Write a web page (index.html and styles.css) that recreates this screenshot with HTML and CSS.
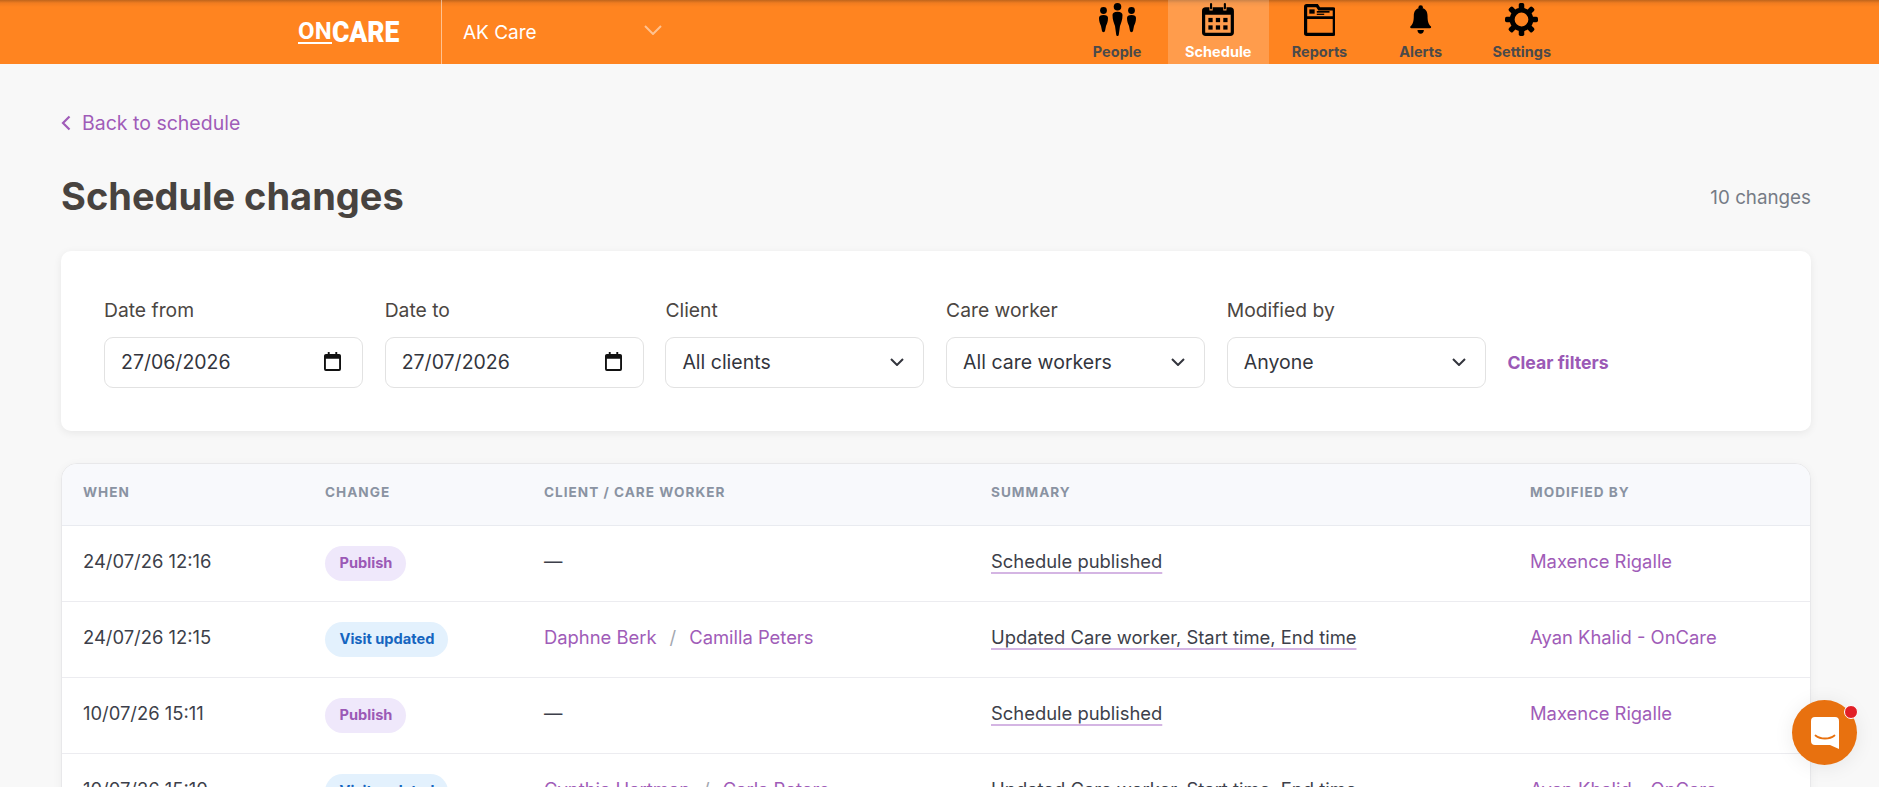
FILE: index.html
```html
<!DOCTYPE html>
<html lang="en">
<head>
<meta charset="utf-8">
<title>Schedule changes</title>
<link rel="stylesheet" href="styles.css">
</head>
<body>
<header class="topbar">
  <a class="logo"><span class="logo-on">ON</span><span class="logo-care">CARE</span></a>
  <div class="org">
    <span class="org-name">AK Care</span>
    <svg class="org-chevron" viewBox="0 0 18 10"><path d="M1 1l8 8 8-8" fill="none" stroke="currentColor" stroke-width="2"/></svg>
  </div>
  <nav class="nav">
    <a class="nav-item">
      <svg class="nav-icon" viewBox="0 0 37 33"><circle cx="18.500" cy="3.800" r="3.800"/><path d="M13.500 12c0-2 1.500-3.300 5-3.300s5 1.300 5 3.300c0 5-1.500 8-2.500 11l-1.200 8.500c-.3 2-2.300 2-2.600 0L16 23c-1-3-2.500-6-2.500-11z"/><circle cx="4.500" cy="7.500" r="3.400"/><path d="M0 15c0-2 1.500-3 4.500-3s4.500 1 4.500 3c0 3.500-1 5.500-2 8l-1 5c-.3 1.500-2.700 1.500-3 0L2 23C1 20.500 0 18.500 0 15z"/><circle cx="32.500" cy="7.500" r="3.400"/><path d="M0 15c0-2 1.500-3 4.500-3s4.500 1 4.500 3c0 3.500-1 5.500-2 8l-1 5c-.3 1.500-2.700 1.500-3 0L2 23C1 20.500 0 18.500 0 15z" transform="translate(28 0)"/></svg>
      <span class="nav-label">People</span>
    </a>
    <a class="nav-item nav-item-active">
      <svg class="nav-icon" viewBox="0 0 30 31"><path d="M3.500 4H7v3h3V4h10v3h3V4h3.500A3.500 3.500 0 0 1 30 7.500v20a3.500 3.500 0 0 1-3.500 3.500h-23A3.500 3.500 0 0 1 0 27.500v-20A3.500 3.500 0 0 1 3.500 4zM3 11v16.500a.5.500 0 0 0 .500.500h23a.5.500 0 0 0 .500-.500V11z"/><rect x="7.500" y="0" width="2" height="6" rx="1"/><rect x="20.500" y="0" width="2" height="6" rx="1"/><rect x="6" y="14" width="4" height="4"/><rect x="13" y="14" width="4" height="4"/><rect x="20" y="14" width="4" height="4"/><rect x="6" y="21" width="4" height="4"/><rect x="13" y="21" width="4" height="4"/><rect x="20" y="21" width="4" height="4"/></svg>
      <span class="nav-label">Schedule</span>
    </a>
    <a class="nav-item">
      <svg class="nav-icon" viewBox="0 0 30 31"><path d="M2.500 1H13l2 3h12.500A2.500 2.500 0 0 1 30 6.500v22a2.500 2.500 0 0 1-2.500 2.500h-25A2.500 2.500 0 0 1 0 28.500v-25A2.500 2.500 0 0 1 2.500 1zM3 4v8.500h24V7H13.500l-2-3zM3 15v13h24V15z" fill-rule="evenodd"/><rect x="5" y="6" width="5" height="4"/><rect x="12" y="7.500" width="12" height="1.600"/><rect x="12" y="10" width="7" height="1.200"/></svg>
      <span class="nav-label">Reports</span>
    </a>
    <a class="nav-item">
      <svg class="nav-icon" viewBox="-4 -2.500 32 36"><circle cx="12" cy="2.500" r="2.500"/><path d="M12 3c5 0 7.500 3.500 7.500 8.500 0 6 1 9 3.500 11.500.8.800.5 2-1 2H2c-1.500 0-1.800-1.200-1-2 2.500-2.500 3.500-5.500 3.500-11.500C4.500 6.500 7 3 12 3z"/><path d="M8.500 27h7c0 2.500-1.500 4-3.500 4s-3.500-1.500-3.500-4z"/></svg>
      <span class="nav-label">Alerts</span>
    </a>
    <a class="nav-item">
      <svg class="nav-icon" viewBox="0 0 30 30"><circle cx="15" cy="15" r="8.500" fill="none" stroke="currentColor" stroke-width="4.500"/><g><rect x="12.500" y="0" width="5" height="6" rx="1.500"/><rect x="12.500" y="24" width="5" height="6" rx="1.500"/><rect x="0" y="12.500" width="6" height="5" rx="1.500"/><rect x="24" y="12.500" width="6" height="5" rx="1.500"/><rect x="12.500" y="0" width="5" height="6" rx="1.500" transform="rotate(45 15 15)"/><rect x="12.500" y="24" width="5" height="6" rx="1.500" transform="rotate(45 15 15)"/><rect x="0" y="12.500" width="6" height="5" rx="1.500" transform="rotate(45 15 15)"/><rect x="24" y="12.500" width="6" height="5" rx="1.500" transform="rotate(45 15 15)"/></g></svg>
      <span class="nav-label">Settings</span>
    </a>
  </nav>
</header>

<main class="page">
  <a class="back">
    <svg class="back-icon" viewBox="0 0 10 16"><path d="M8.500 1.500L2 8l6.500 6.500" fill="none" stroke="currentColor" stroke-width="2.200"/></svg>
    <span>Back to schedule</span>
  </a>
  <div class="title-row">
    <h1 class="title">Schedule changes</h1>
    <span class="count">10 changes</span>
  </div>

  <section class="filters">
    <div class="field">
      <label class="field-label">Date from</label>
      <div class="control"><span>27/06/2026</span><svg class="cal" viewBox="0 0 18 20"><path d="M4 0h2v2h6V0h2v2h2a2 2 0 0 1 2 2v14a2 2 0 0 1-2 2H2a2 2 0 0 1-2-2V4a2 2 0 0 1 2-2h2zM2 7v11h14V7z"/></svg></div>
    </div>
    <div class="field">
      <label class="field-label">Date to</label>
      <div class="control"><span>27/07/2026</span><svg class="cal" viewBox="0 0 18 20"><path d="M4 0h2v2h6V0h2v2h2a2 2 0 0 1 2 2v14a2 2 0 0 1-2 2H2a2 2 0 0 1-2-2V4a2 2 0 0 1 2-2h2zM2 7v11h14V7z"/></svg></div>
    </div>
    <div class="field">
      <label class="field-label">Client</label>
      <div class="control"><span>All clients</span><svg class="chev" viewBox="0 0 14 8"><path d="M1 1l6 6 6-6" fill="none" stroke="currentColor" stroke-width="2"/></svg></div>
    </div>
    <div class="field">
      <label class="field-label">Care worker</label>
      <div class="control"><span>All care workers</span><svg class="chev" viewBox="0 0 14 8"><path d="M1 1l6 6 6-6" fill="none" stroke="currentColor" stroke-width="2"/></svg></div>
    </div>
    <div class="field">
      <label class="field-label">Modified by</label>
      <div class="control"><span>Anyone</span><svg class="chev" viewBox="0 0 14 8"><path d="M1 1l6 6 6-6" fill="none" stroke="currentColor" stroke-width="2"/></svg></div>
    </div>
    <a class="clear">Clear filters</a>
  </section>

  <section class="table-card">
    <table class="table">
      <thead>
        <tr>
          <th class="col-when">When</th>
          <th class="col-change">Change</th>
          <th class="col-who">Client / Care worker</th>
          <th class="col-summary">Summary</th>
          <th class="col-by">Modified by</th>
        </tr>
      </thead>
      <tbody>
        <tr>
          <td>24/07/26 12:16</td>
          <td><span class="badge badge-publish">Publish</span></td>
          <td>—</td>
          <td><a class="summary">Schedule published</a></td>
          <td><a class="link">Maxence Rigalle</a></td>
        </tr>
        <tr>
          <td>24/07/26 12:15</td>
          <td><span class="badge badge-visit">Visit updated</span></td>
          <td><a class="link">Daphne Berk</a><span class="sep">/</span><a class="link">Camilla Peters</a></td>
          <td><a class="summary">Updated Care worker, Start time, End time</a></td>
          <td><a class="link">Ayan Khalid - OnCare</a></td>
        </tr>
        <tr>
          <td>10/07/26 15:11</td>
          <td><span class="badge badge-publish">Publish</span></td>
          <td>—</td>
          <td><a class="summary">Schedule published</a></td>
          <td><a class="link">Maxence Rigalle</a></td>
        </tr>
        <tr>
          <td>10/07/26 15:10</td>
          <td><span class="badge badge-visit">Visit updated</span></td>
          <td><a class="link">Cynthia Hartman</a><span class="sep">/</span><a class="link">Carla Peters</a></td>
          <td><a class="summary">Updated Care worker, Start time, End time</a></td>
          <td><a class="link">Ayan Khalid - OnCare</a></td>
        </tr>
      </tbody>
    </table>
  </section>
</main>

<button class="fab" aria-label="Open chat">
  <svg class="fab-icon" viewBox="0 0 28 32"><path d="M4 0h20a4 4 0 0 1 4 4v28l-9-4H4a4 4 0 0 1-4-4V4a4 4 0 0 1 4-4z" fill="#fff"/><path d="M4.500 18.500c5 4 14 4 19 0" fill="none" stroke="#e8710f" stroke-width="1.800" stroke-linecap="round"/></svg>
  <span class="fab-dot"></span>
</button>
</body>
</html>
```

FILE: styles.css
```css
* { box-sizing: border-box; }
html, body { height: 100%; }
body {
  margin: 0;
  overflow: hidden;
  background: #f8f8f8;
  color: #3d3f4a;
  font-family: Inter, "Noto Sans", sans-serif;
  font-size: 18.400px;
}
a { color: inherit; text-decoration: none; }

.topbar {
  display: flex;
  height: 64px;
  padding-left: 298px;
  background: linear-gradient(to bottom, #bf651c 0, #f07c20 3px, #ff8420 7px);
}
.logo {
  display: flex;
  align-items: center;
  width: 143px;
  color: #fff;
  font-family: Roboto, sans-serif;
  line-height: 1;
}
.logo-on { font-size: 24px; font-weight: 700; border-bottom: 2px solid #fff; line-height: 21px; letter-spacing: .2px; }
.logo-care {
  display: inline-block;
  font-size: 26.500px;
  font-weight: 900;
  transform: scaleY(1.12);
}
.org {
  display: flex;
  align-items: center;
  width: 625.500px;
  padding-left: 21px;
  border-left: 1px solid rgba(255, 255, 255, .5);
  color: #fff;
}
.org-name { width: 181px; font-size: 19px; white-space: nowrap; }
.org-chevron { flex: none; width: 18px; height: 10px; margin-bottom: 4px; color: rgba(255, 255, 255, .5); }
.nav { display: flex; }
.nav-item {
  display: flex;
  flex-direction: column;
  align-items: center;
  width: 101.200px;
  color: #4a4a4a;
}
.nav-item-active { background: rgba(255, 255, 255, .2); color: #fff; }
.nav-icon { height: 33px; margin-top: 3px; fill: #000; color: #000; }
.nav-label { margin-top: 8px; font-size: 14.500px; font-weight: 700; line-height: 16px; white-space: nowrap; }

.page { padding: 47px 68px 0 61px; }
.back { display: flex; align-items: center; gap: 11px; height: 24px; color: #a05cb8; font-size: 19.500px; }
.back-icon { width: 10px; height: 16px; }
.title-row { display: flex; align-items: center; justify-content: space-between; margin-top: 36px; height: 50px; }
.title { margin: 0; color: #48433f; font-size: 38px; font-weight: 700; line-height: 50px; }
.count { margin-top: 3px; color: #767c86; font-size: 18.800px; }

.filters {
  display: flex;
  gap: 21.700px;
  align-items: flex-end;
  margin-top: 30px;
  padding: 47px 43px 43px;
  background: #fff;
  border-radius: 10px;
  box-shadow: 0 2px 8px rgba(0, 0, 0, .07);
}
.field { display: flex; flex-direction: column; gap: 15px; width: 259px; }
.field-label { color: #4b4642; font-size: 19.300px; line-height: 24px; }
.control {
  display: flex;
  align-items: center;
  justify-content: space-between;
  height: 51px;
  padding: 0 21px 2px 16px;
  background: #fff;
  border: 1px solid #e2e2e2;
  border-radius: 9px;
  color: #33353d;
  font-size: 19.500px;
}
.cal { width: 17px; height: 19px; fill: #111; }
.chev { width: 14px; height: 8px; margin-right: -2px; color: #33353d; }
.clear { align-self: flex-end; color: #9b59b6; font-size: 17.700px; font-weight: 700; line-height: 50px; white-space: nowrap; }

.table-card {
  margin-top: 32px;
  background: #fff;
  border: 1px solid #e8e8ea;
  border-radius: 16px;
  overflow: hidden;
  box-shadow: 0 2px 10px rgba(0, 0, 0, .05);
}
.table { width: 100%; border-collapse: collapse; table-layout: fixed; }
.table th {
  height: 61px;
  padding: 0 0 4px 21px;
  background: #f8f9fc;
  border-bottom: 1px solid #e9ebf0;
  color: #8a93a2;
  font-size: 13.600px;
  font-weight: 700;
  letter-spacing: 1px;
  text-align: left;
  text-transform: uppercase;
}
.col-when { width: 242px; }
.col-change { width: 219px; }
.col-who { width: 447px; }
.col-summary { width: 539px; }
.table td {
  height: 76px;
  padding: 0 0 4px 21px;
  border-bottom: 1px solid #ececf0;
  white-space: nowrap;
}
.link { color: #a05cb8; }
.sep { margin: 0 13px; color: #a3a7af; }
.summary {
  text-decoration: underline;
  text-decoration-color: #d4b5e3;
  text-decoration-thickness: 2px;
  text-underline-offset: 4px;
}
.badge {
  position: relative;
  top: 2px;
  display: inline-flex;
  align-items: center;
  height: 35px;
  padding: 0 14px 0 14.500px;
  border-radius: 18px;
  font-size: 14.600px;
  font-weight: 700;
}
.badge-publish { background: #efe8fb; color: #9b59b6; }
.badge-visit { background: #e3f1fd; color: #1565c0; }

.fab {
  position: fixed;
  left: 1792px;
  top: 700px;
  display: flex;
  align-items: center;
  justify-content: center;
  width: 65px;
  height: 65px;
  padding: 0;
  border: 0;
  border-radius: 50%;
  background: #e8710f;
  box-shadow: 0 2px 20px rgba(0, 0, 0, .08);
}
.fab-icon { width: 28px; height: 32px; }
.fab-dot {
  position: absolute;
  right: -1px;
  top: 5px;
  width: 14px;
  height: 14px;
  background: #e21f26;
  border: 1.500px solid #fff;
  border-radius: 50%;
}
```
